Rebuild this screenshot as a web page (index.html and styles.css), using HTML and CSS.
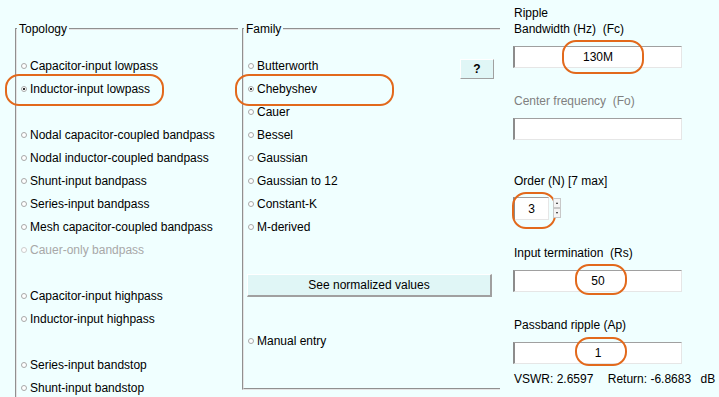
FILE: index.html
```html
<!DOCTYPE html>
<html lang="en">
<head>
    <meta charset="UTF-8">
    <title>Filter design</title>
    <link rel="stylesheet" href="styles.css">
</head>
<body>
    <div class="app">
        <fieldset class="group topology">
            <legend>Topology</legend>
            <label class="opt"><input type="radio" name="topo">Capacitor-input lowpass</label>
            <label class="opt ring ring-topo"><input type="radio" name="topo" checked>Inductor-input lowpass</label>
            <div class="gap"></div>
            <label class="opt"><input type="radio" name="topo">Nodal capacitor-coupled bandpass</label>
            <label class="opt"><input type="radio" name="topo">Nodal inductor-coupled bandpass</label>
            <label class="opt"><input type="radio" name="topo">Shunt-input bandpass</label>
            <label class="opt"><input type="radio" name="topo">Series-input bandpass</label>
            <label class="opt"><input type="radio" name="topo">Mesh capacitor-coupled bandpass</label>
            <label class="opt disabled"><input type="radio" name="topo" disabled>Cauer-only bandpass</label>
            <div class="gap"></div>
            <label class="opt"><input type="radio" name="topo">Capacitor-input highpass</label>
            <label class="opt"><input type="radio" name="topo">Inductor-input highpass</label>
            <div class="gap"></div>
            <label class="opt"><input type="radio" name="topo">Series-input bandstop</label>
            <label class="opt"><input type="radio" name="topo">Shunt-input bandstop</label>
        </fieldset>

        <fieldset class="group family">
            <legend>Family</legend>
            <div class="opt">
                <label><input type="radio" name="fam">Butterworth</label>
                <button class="help">?</button>
            </div>
            <label class="opt ring ring-fam"><input type="radio" name="fam" checked>Chebyshev</label>
            <label class="opt"><input type="radio" name="fam">Cauer</label>
            <label class="opt"><input type="radio" name="fam">Bessel</label>
            <label class="opt"><input type="radio" name="fam">Gaussian</label>
            <label class="opt"><input type="radio" name="fam">Gaussian to 12</label>
            <label class="opt"><input type="radio" name="fam">Constant-K</label>
            <label class="opt"><input type="radio" name="fam">M-derived</label>
            <button class="wide">See normalized values</button>
            <label class="opt manual"><input type="radio" name="fam">Manual entry</label>
        </fieldset>

        <div class="params">
            <div class="label first">Ripple<br>Bandwidth (Hz)&nbsp; (Fc)</div>
            <div class="field ring ring-fc"><input type="text" value="130M"></div>

            <div class="label muted">Center frequency&nbsp; (Fo)</div>
            <div class="field"><input type="text" value=""></div>

            <div class="label order">Order (N) [7 max]</div>
            <div class="spinner">
                <div class="field ring ring-n"><input type="text" value="3" class="small"></div>
                <div class="spin">
                    <span class="arrow up"></span>
                    <span class="arrow down"></span>
                </div>
            </div>

            <div class="label">Input termination&nbsp; (Rs)</div>
            <div class="field ring ring-rs"><input type="text" value="50"></div>

            <div class="label">Passband ripple (Ap)</div>
            <div class="field ring ring-ap"><input type="text" value="1"></div>

            <div class="result">
                <span>VSWR: 2.6597</span>
                <span class="ret">Return: -6.8683</span>
                <span class="db">dB</span>
            </div>
        </div>
    </div>
</body>
</html>
```

FILE: styles.css
```css
* {
    box-sizing: border-box;
}
body {
    margin: 0;
    background-color: #f0ffff;
    font-family: 'Liberation Sans', Arial, sans-serif;
    font-size: 12px;
    color: #000000;
    overflow: hidden;
}
.app {
    display: flex;
    align-items: flex-start;
    height: 397px;
    overflow: hidden;
    padding-left: 15px;
}
.group {
    margin: 22px 0 0 0;
    padding: 18px 0 0 4px;
    border: 2px groove #e4e4e4;
    border-right: none;
    min-inline-size: 0;
}
.group legend {
    margin-left: -4px;
    padding: 0 2px;
    line-height: 14px;
    font-size: 12px;
}
.topology {
    width: 223px;
    height: 375px;
    border-bottom: none;
}
.family {
    width: 258px;
    height: 368px;
    margin-left: 4px;
    padding-right: 6px;
}
.opt {
    display: flex;
    align-items: center;
    height: 23px;
    white-space: nowrap;
}
.opt label {
    display: flex;
    align-items: center;
}
.gap {
    height: 23px;
}
.disabled {
    color: #a8a8a8;
}
input[type="radio"] {
    appearance: none;
    width: 6px;
    height: 6px;
    margin: 1px 3px 0 0;
    border: 1px solid #a8a8a8;
    border-radius: 50%;
    background-color: #ffffff;
    flex-shrink: 0;
}
input[type="radio"]:checked {
    background: radial-gradient(circle, #333333 0 1px, #ffffff 1.5px);
}
input[type="radio"]:disabled {
    border-color: #cccccc;
}
.help {
    margin-left: auto;
    align-self: flex-end;
    margin-bottom: -2px;
    width: 34px;
    height: 20px;
    padding: 0;
    font-family: inherit;
    font-size: 12px;
    font-weight: bold;
    background-color: #e0f6f6;
    border: 1px solid #ffffff;
    border-right-color: #a0a0a0;
    border-bottom-color: #a0a0a0;
}
.wide {
    display: block;
    width: 245px;
    height: 23px;
    margin: 36px 0 0 -1px;
    padding: 0;
    font-family: inherit;
    font-size: 12px;
    background-color: #e0f6f6;
    border: 1px solid #ffffff;
    border-right: 2px solid #a0a0a0;
    border-bottom: 2px solid #a0a0a0;
}
.manual {
    margin-top: 32px;
}
.params {
    display: flex;
    flex-direction: column;
    width: 170px;
    margin-left: 13px;
    padding-top: 5px;
}
.label {
    line-height: 16px;
    padding-left: 1px;
    margin-top: 25px;
    white-space: nowrap;
}
.label.first {
    margin-top: 0;
}
.label.order {
    margin-top: 33px;
}
.muted {
    color: #808080;
}
.field {
    position: relative;
    margin-top: 9px;
}
.field input {
    display: block;
    width: 169px;
    height: 22px;
    padding: 0;
    font-family: inherit;
    font-size: 12px;
    text-align: center;
    background-color: #ffffff;
    border-top: 1px solid #a0a0a0;
    border-left: 2px solid #8c8c8c;
    border-right: 1px solid #e6e6e6;
    border-bottom: 1px solid #e6e6e6;
    outline: none;
}
.spinner {
    display: flex;
    align-items: flex-start;
    margin-top: 8px;
}
.spinner .field {
    margin-top: 0;
}
.field input.small {
    width: 36px;
    height: 23px;
}
.spin {
    display: flex;
    flex-direction: column;
    margin: 1px 0 0 4px;
}
.arrow {
    position: relative;
    width: 8px;
    height: 10px;
    background-color: #f4f4f4;
    border: 1px solid #c8c8c8;
}
.arrow::after {
    content: '';
    position: absolute;
    left: 1.5px;
    border-left: 1.5px solid transparent;
    border-right: 1.5px solid transparent;
}
.arrow.up::after {
    top: 2.5px;
    border-bottom: 2px solid #222222;
}
.arrow.down::after {
    top: 3px;
    border-top: 2px solid #222222;
}
.result {
    margin-top: 7px;
    line-height: 16px;
    padding-left: 1px;
    white-space: nowrap;
}
.ret {
    margin-left: 11px;
}
.db {
    margin-left: 6px;
}

/* orange highlight marks drawn over the form */
.ring {
    position: relative;
}
.ring::before {
    content: '';
    position: absolute;
    border: 2px solid #e2691c;
    border-radius: 14px;
    pointer-events: none;
}
.ring-topo::before {
    left: -16px;
    top: -3px;
    width: 155px;
    height: 28px;
}
.ring-fam::before {
    left: -13px;
    top: -3px;
    width: 155px;
    height: 28px;
}
.ring-fc::before {
    left: 49px;
    top: -6px;
    width: 78px;
    height: 30px;
}
.ring-n::before {
    left: -1px;
    top: -5px;
    width: 40px;
    height: 33px;
}
.ring-rs::before {
    left: 62px;
    top: -6px;
    width: 48px;
    height: 27px;
}
.ring-ap::before {
    left: 62px;
    top: -5px;
    width: 48px;
    height: 25px;
}
```
